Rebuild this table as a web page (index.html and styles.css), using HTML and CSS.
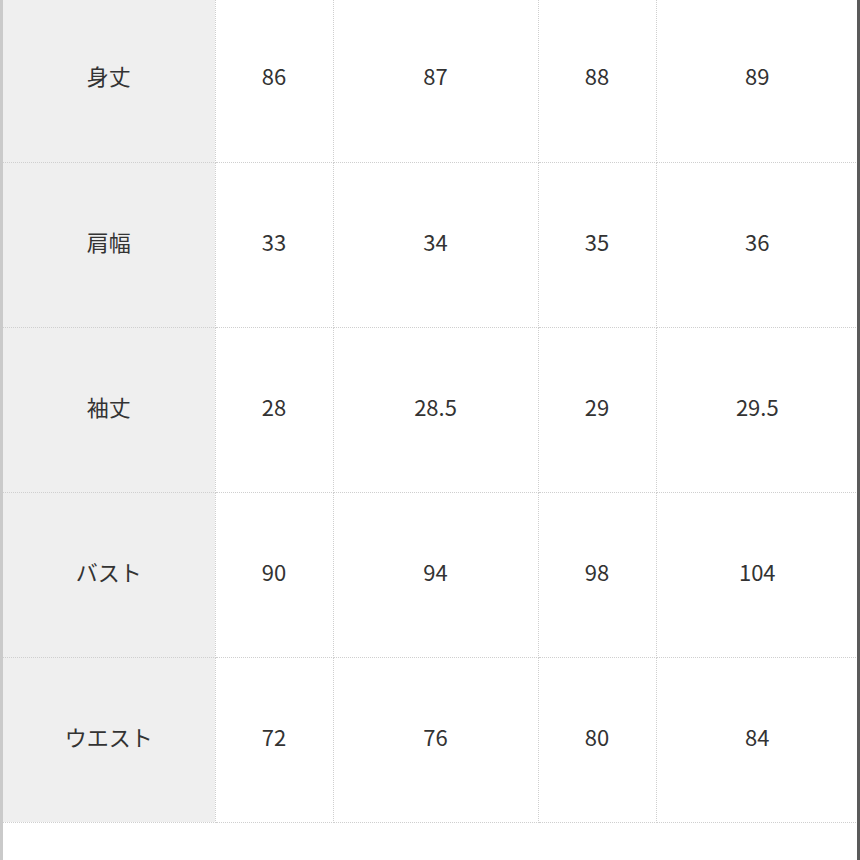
FILE: index.html
```html
<!DOCTYPE html>
<html lang="ja">
<head>
<meta charset="utf-8">
<link rel="stylesheet" href="styles.css">
</head>
<body>
<div class="frame">
  <table class="sizes">
    <colgroup>
      <col class="c1"><col class="c2"><col class="c3"><col class="c4"><col class="c5">
    </colgroup>
    <tbody>
      <tr class="first"><th>身丈</th><td>86</td><td>87</td><td>88</td><td>89</td></tr>
      <tr><th>肩幅</th><td>33</td><td>34</td><td>35</td><td>36</td></tr>
      <tr><th>袖丈</th><td>28</td><td>28.5</td><td>29</td><td>29.5</td></tr>
      <tr><th>バスト</th><td>90</td><td>94</td><td>98</td><td>104</td></tr>
      <tr><th>ウエスト</th><td>72</td><td>76</td><td>80</td><td>84</td></tr>
    </tbody>
  </table>
  <div class="after"></div>
</div>
</body>
</html>
```

FILE: styles.css
```css
html, body {
  margin: 0;
  padding: 0;
  background: #ffffff;
}
body {
  font-family: "Noto Sans CJK JP", "Noto Sans", sans-serif;
  color: #333333;
}
.frame {
  width: 860px;
  height: 860px;
  box-sizing: border-box;
  border-left: 3px solid #cacaca;
  border-right: 3px solid #5a5a5a;
  overflow: hidden;
  display: flex;
  flex-direction: column;
}
.sizes {
  border-collapse: collapse;
  table-layout: fixed;
  width: 855px;
  margin-top: -3px;
}
.c1 { width: 212px; }
.c2 { width: 118px; }
.c3 { width: 205px; }
.c4 { width: 118px; }
.c5 { width: 202px; }
.sizes th, .sizes td {
  height: 165px;
  padding: 0 0 8px 0;
  box-sizing: border-box;
  border: 1px dotted #cfcfcf;
  text-align: center;
  vertical-align: middle;
  font-size: 22px;
  font-weight: 400;
  line-height: 1;
}
.sizes th {
  background: #efefef;
  border-left: none;
}
.sizes td:last-child {
  border-right: none;
}
.sizes tr.first th, .sizes tr.first td {
  border-top: none;
}
.sizes td {
  background: #ffffff;
}
.after {
  flex: 1;
  background: #ffffff;
}
```
